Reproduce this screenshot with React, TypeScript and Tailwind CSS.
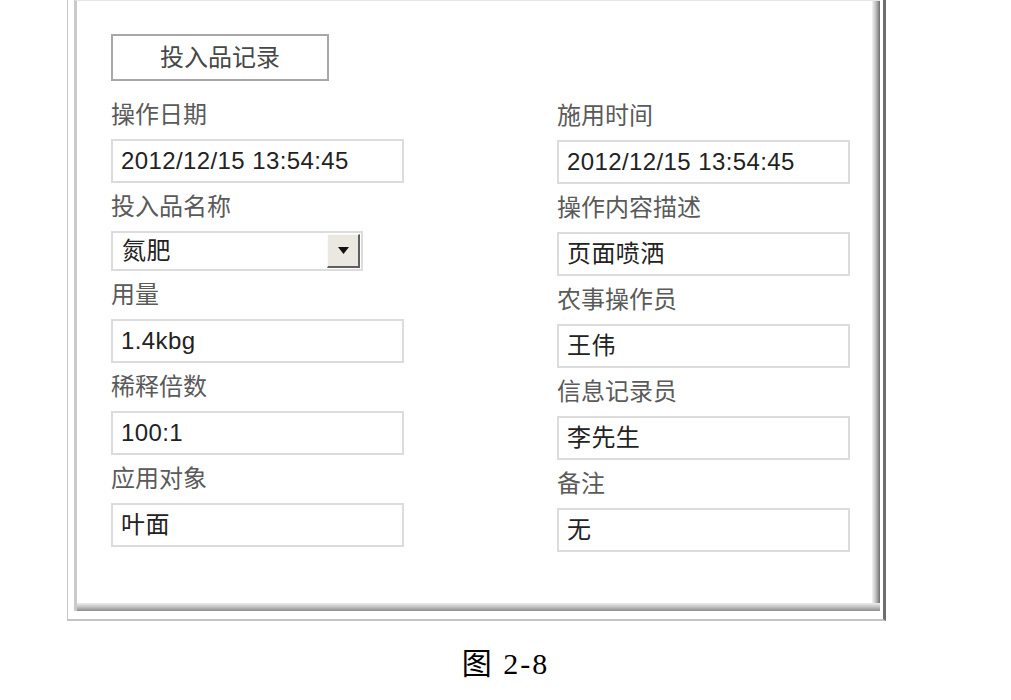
import React from 'react';

interface Field {
  label: string;
  value: string;
  select?: boolean;
}

const leftFields: Field[] = [
  { label: '操作日期', value: '2012/12/15 13:54:45' },
  { label: '投入品名称', value: '氮肥', select: true },
  { label: '用量', value: '1.4kbg' },
  { label: '稀释倍数', value: '100:1' },
  { label: '应用对象', value: '叶面' },
];

const rightFields: Field[] = [
  { label: '施用时间', value: '2012/12/15 13:54:45' },
  { label: '操作内容描述', value: '页面喷洒' },
  { label: '农事操作员', value: '王伟' },
  { label: '信息记录员', value: '李先生' },
  { label: '备注', value: '无' },
];

const FieldRow: React.FC<{ field: Field }> = ({ field }) => (
  <div className="flex flex-col">
    <div className="text-[24px] leading-[24px] text-[#5a5a5a] mb-[12px]">{field.label}</div>
    {field.select ? (
      <div className="w-[252px] h-[40px] border-2 border-[#dcdcdc] flex items-center justify-between pl-[9px] pr-[1px] mb-[12px]">
        <span className="text-[24px] tracking-[0.4px] text-[#222]">{field.value}</span>
        <div className="w-[33px] h-[34px] bg-[#ebe8e1] border-t border-l border-t-[#fafafa] border-l-[#fafafa] border-r-2 border-b-2 border-r-[#5e5e5e] border-b-[#5e5e5e] flex items-center justify-center">
          <svg width="11" height="7" viewBox="0 0 11 7">
            <path d="M0 0H11L5.5 7Z" fill="#111" />
          </svg>
        </div>
      </div>
    ) : (
      <div className="w-[293px] h-[44px] border-2 border-[#dcdcdc] flex items-center pl-[8px] mb-[12px]">
        <span className="text-[24px] tracking-[0.4px] text-[#222]">{field.value}</span>
      </div>
    )}
  </div>
);

const App: React.FC = () => {
  return (
    <div className="w-[1011px] h-[700px] bg-white font-['Liberation_Sans','Noto_Sans_CJK_SC',sans-serif]">
      {/* window frame */}
      <div className="ml-[67px] w-[819px] h-[621px] border-l border-l-[#c8c8c8] border-r-[3px] border-r-[#6e6e6e] border-b-2 border-b-[#c4c4c4] pl-[6px] pr-[3px] pb-[8px]">
        <div className="h-full flex flex-col border-l-[3px] border-l-[#cacaca] border-t border-t-[#e6e6e6]">
          <div className="flex flex-1">
            <div className="flex-1 pl-[34px] pt-[33px]">
              <div className="w-[218px] h-[47px] border-2 border-[#a8a8a8] flex items-center justify-center text-[24px] text-[#474747]">
                投入品记录
              </div>
              <div className="flex gap-[153px] mt-[22px]">
                <div className="flex flex-col w-[293px]">
                  {leftFields.map((f) => (
                    <FieldRow key={f.label} field={f} />
                  ))}
                </div>
                <div className="flex flex-col w-[293px] pt-[1px]">
                  {rightFields.map((f) => (
                    <FieldRow key={f.label} field={f} />
                  ))}
                </div>
              </div>
            </div>
            <div className="w-[8px] bg-gradient-to-r from-[#f4f4f4] via-[#bdbdbd] to-[#6f6f6f]" />
          </div>
          <div className="h-[8px] bg-gradient-to-b from-[#eeeeee] via-[#c2c2c2] to-[#8c8c8c]" />
        </div>
      </div>

      <div className="mt-[24px] text-center text-[30px] leading-[38px] tracking-[2px] text-black font-['Liberation_Serif','Noto_Sans_CJK_SC',serif]">
        图 2-8
      </div>
    </div>
  );
};

export default App;
